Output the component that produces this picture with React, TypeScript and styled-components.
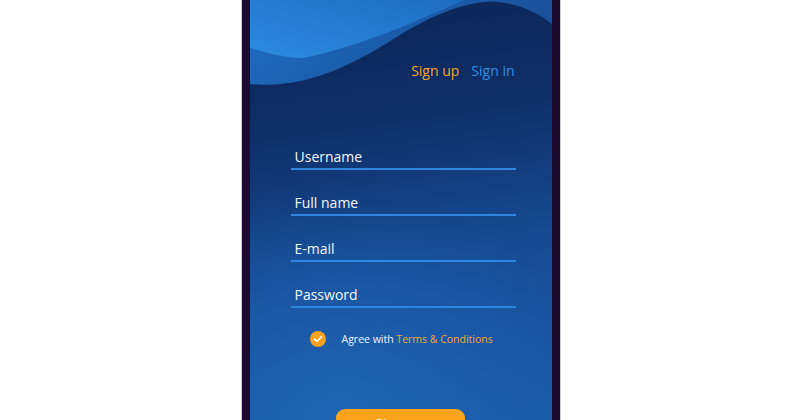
import React from 'react';
import styled, { createGlobalStyle } from 'styled-components';

const GlobalStyle = createGlobalStyle`
  html, body {
    margin: 0;
    padding: 0;
    background: #ffffff;
  }
  body {
    font-family: "Open Sans", "Liberation Sans", sans-serif;
  }
`;

const Page = styled.div`
  width: 800px;
  height: 420px;
  display: flex;
  justify-content: center;
  overflow: hidden;
`;

const Phone = styled.div`
  width: 302px;
  height: 420px;
  border-left: 8px solid #1c0b2e;
  border-right: 8px solid #1c0b2e;
  box-shadow: -1px 0 0 #cfcfd4, 1px 0 0 #cfcfd4;
  margin-left: 1px;
`;

const Screen = styled.div`
  position: relative;
  height: 100%;
  overflow: hidden;
  background:
    radial-gradient(ellipse 120% 70% at 30% 100%, #1f63b4 0%, rgba(31, 99, 180, 0) 75%),
    linear-gradient(172deg, #0b2455 0%, #0f2f68 30%, #164b93 60%, #1a5aa8 100%);
`;

const Wave = styled.svg`
  position: absolute;
  top: 0;
  left: 0;
  width: 302px;
  height: 100px;
`;

const Content = styled.div`
  position: relative;
  display: flex;
  flex-direction: column;
  height: 100%;
`;

const Header = styled.nav`
  display: flex;
  justify-content: flex-end;
  gap: 12px;
  padding: 61px 37px 0 0;
`;

const NavLink = styled.a<{ $active?: boolean }>`
  font-size: 14px;
  line-height: 20px;
  color: ${(p) => (p.$active ? '#f4a630' : '#3a8fe2')};
  text-decoration: none;
`;

const Form = styled.form`
  display: flex;
  flex-direction: column;
  gap: 24px;
  padding: 67px 36px 0 41px;
`;

const Field = styled.label`
  display: block;
  border-bottom: 2px solid #2f86e0;
  padding: 0 0 2px 4px;
  font-size: 14px;
  line-height: 18px;
  color: #f4f7fb;
`;

const Agree = styled.div`
  display: flex;
  align-items: center;
  gap: 16px;
  padding: 23px 0 0 60px;
  font-size: 10.5px;
  color: #eef3fa;
`;

const Check = styled.span`
  width: 16px;
  height: 16px;
  border-radius: 50%;
  background: #f6a21c;
  display: flex;
  align-items: center;
  justify-content: center;
`;

const Terms = styled.span`
  color: #f4a630;
`;

const Button = styled.button`
  align-self: center;
  margin-top: 62px;
  width: 129px;
  height: 40px;
  border: none;
  border-radius: 9px;
  background: #fba31a;
  color: #ffffff;
  font-family: inherit;
  font-size: 15px;
  line-height: 20px;
  padding: 4px 0 0;
  display: flex;
  justify-content: center;
  align-items: flex-start;
`;

export default function App() {
  return (
    <>
      <GlobalStyle />
      <Page>
        <Phone>
          <Screen>
            <Wave viewBox="0 0 302 100">
              <defs>
                <linearGradient id="band" x1="0" y1="0" x2="1" y2="0.3">
                  <stop offset="0" stopColor="#2070c4" />
                  <stop offset="0.6" stopColor="#1a5aa8" />
                  <stop offset="1" stopColor="#1a4f98" />
                </linearGradient>
                <linearGradient id="top" x1="0" y1="1" x2="1" y2="0">
                  <stop offset="0" stopColor="#2c8be0" />
                  <stop offset="1" stopColor="#1e6cc0" />
                </linearGradient>
              </defs>
              <path
                d="M0,84 C60,90 110,60 150,35 C190,10 225,0 248,2 C270,4 290,14 302,24 V0 H0 Z"
                fill="url(#band)"
              />
              <path
                d="M0,48 C25,55 42,60 58,57 C110,46 170,20 214,0 H0 Z"
                fill="url(#top)"
              />
            </Wave>
            <Content>
              <Header>
                <NavLink $active>Sign up</NavLink>
                <NavLink>Sign in</NavLink>
              </Header>
              <Form>
                <Field>Username</Field>
                <Field>Full name</Field>
                <Field>E-mail</Field>
                <Field>Password</Field>
              </Form>
              <Agree>
                <Check>
                  <svg width="10" height="10" viewBox="0 0 10 10">
                    <path d="M1.5,5.2 L4,7.5 L8.5,2.5" fill="none" stroke="#fff" strokeWidth="1.6" strokeLinecap="round" strokeLinejoin="round" />
                  </svg>
                </Check>
                <span>
                  Agree with <Terms>Terms &amp; Conditions</Terms>
                </span>
              </Agree>
              <Button type="button">Sign up</Button>
            </Content>
          </Screen>
        </Phone>
      </Page>
    </>
  );
}
